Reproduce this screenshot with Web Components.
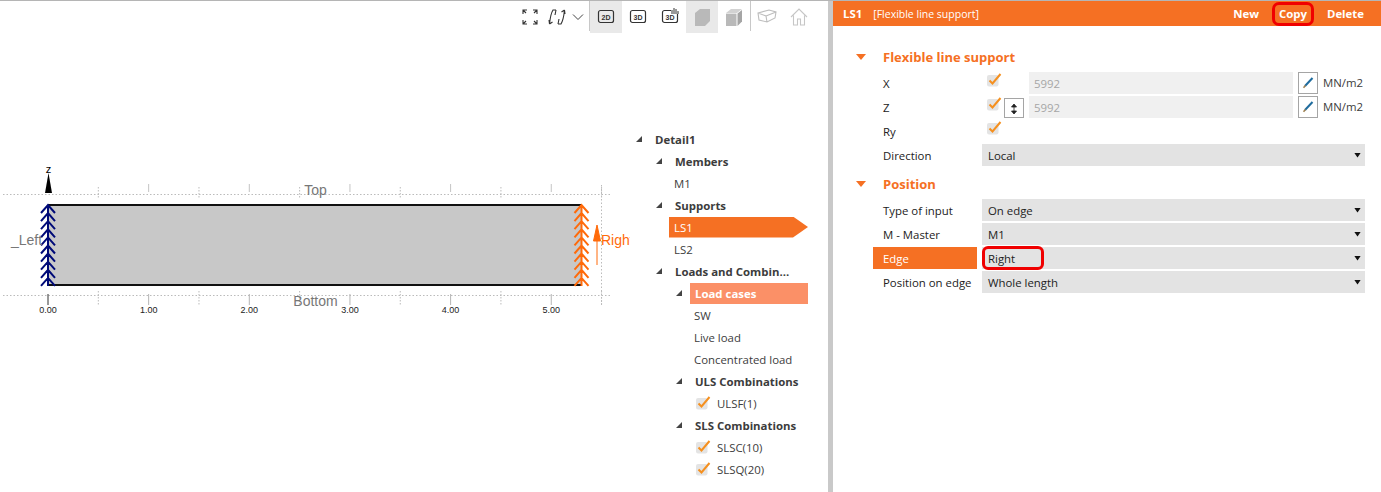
<!DOCTYPE html>
<html lang="en">
<head>
<meta charset="UTF-8">
<title>Flexible line support</title>
<style>
    html, body { margin: 0; height: 100%; background: #fff; overflow: hidden; }
    body { font: 11.4px "Open Sans", "Noto Sans", sans-serif; color: #3c3c3c; }
</style>
</head>
<body>
<app-shell>
    <div slot="left">
        <tool-bar></tool-bar>
        <div style="display:flex">
            <model-canvas></model-canvas>
            <tree-panel>
                <tree-row level="0" arrow bold>Detail1</tree-row>
                <tree-row level="1" arrow bold>Members</tree-row>
                <tree-row level="2">M1</tree-row>
                <tree-row level="1" arrow bold>Supports</tree-row>
                <tree-row level="2" state="active">LS1</tree-row>
                <tree-row level="2">LS2</tree-row>
                <tree-row level="1" arrow bold>Loads and Combin...</tree-row>
                <tree-row level="2" arrow bold state="soft">Load cases</tree-row>
                <tree-row level="3">SW</tree-row>
                <tree-row level="3">Live load</tree-row>
                <tree-row level="3">Concentrated load</tree-row>
                <tree-row level="2" arrow bold>ULS Combinations</tree-row>
                <tree-row level="3" check>ULSF(1)</tree-row>
                <tree-row level="2" arrow bold>SLS Combinations</tree-row>
                <tree-row level="3" check>SLSC(10)</tree-row>
                <tree-row level="3" check>SLSQ(20)</tree-row>
            </tree-panel>
        </div>
    </div>
    <div slot="right">
        <panel-header></panel-header>
        <prop-section title="Flexible line support">
            <prop-row label="X"><value-field value="5992" unit="MN/m2"></value-field></prop-row>
            <prop-row label="Z"><value-field value="5992" unit="MN/m2" flip></value-field></prop-row>
            <prop-row label="Ry"><value-field></value-field></prop-row>
            <prop-row label="Direction"><select-box>Local</select-box></prop-row>
        </prop-section>
        <prop-section title="Position">
            <prop-row label="Type of input"><select-box>On edge</select-box></prop-row>
            <prop-row label="M - Master"><select-box>M1</select-box></prop-row>
            <prop-row label="Edge" active><select-box marked>Right</select-box></prop-row>
            <prop-row label="Position on edge"><select-box>Whole length</select-box></prop-row>
        </prop-section>
    </div>
</app-shell>

<script>
    const CHECK = `<svg width="15" height="14" viewBox="0 0 15 14" style="display:block">
        <rect x="0" y="2" width="11.5" height="11.5" rx="2" fill="#e4e4e4"/>
        <path d="M2.5 7.5 L5.5 10.5 L13.5 1" fill="none" stroke="#f5901f" stroke-width="2"/></svg>`;

    // Outer frame: model view on the left, properties on the right
    class AppShell extends HTMLElement {
        constructor() {
            super();
            this.attachShadow({ mode: 'open' }).innerHTML = `
                <style>
                    :host { display: flex; height: 492px; box-sizing: border-box; border-top: 1px solid #b5b5b5; }
                    .left { width: 828px; flex: none; }
                    .right { flex: 1; border-left: 5px solid #c9c9c9; min-width: 0; }
                </style>
                <div class="left"><slot name="left"></slot></div>
                <div class="right"><slot name="right"></slot></div>`;
        }
    }

    class ToolBar extends HTMLElement {
        constructor() {
            super();
            const ic = (body, on) => `<div class="b ${on ? 'on' : ''}"><svg width="24" height="24" viewBox="0 0 24 24">${body}</svg></div>`;
            const label = t => `<rect x="4.5" y="5.5" width="15" height="12" rx="2" fill="none" stroke="#333" stroke-width="1.2"/>
                <text x="12" y="14.5" text-anchor="middle" font-family="Liberation Sans" font-weight="bold" font-size="7" fill="#333">${t}</text>`;
            this.attachShadow({ mode: 'open' }).innerHTML = `
                <style>
                    :host { display: flex; height: 32px; margin-bottom: 4px; justify-content: flex-end; padding-right: 13px; }
                    .b { width: 32px; height: 32px; display: flex; align-items: center; justify-content: center; }
                    .on { background: #e9e9e9; }
                    .sep { width: 1px; height: 30px; background: #c8c8c8; }
                    .fit { width: 34px; }
                    .nar { width: 31px; }
                    svg { display: block; }
                </style>
                <div class="b fit"><svg width="24" height="24" viewBox="0 0 24 24" fill="none" stroke="#333" stroke-width="1.1">
                    <path d="M5 9V5h4M5 5l3 3M19 9V5h-4M19 5l-3 3M5 15v4h4M5 19l3-3M19 15v4h-4M19 19l-3-3"/></svg></div>
                <div class="b" style="width:20px"><svg width="20" height="24" viewBox="0 0 20 24" fill="none" stroke="#333" stroke-width="1.1">
                    <path d="M9 5H6C3.5 9 3 14 2.5 19M2.5 19l-.5-4M2.5 19l3-2M11 19h3c2.500-4 3-9 3.500-14M17.500 5l.5 4M17.500 5l-3 2M9 5l-1 5M11 19l1-5"/></svg></div>
                <div class="b" style="width:22px"><svg width="12" height="8" viewBox="0 0 12 8" fill="none" stroke="#444"><path d="M1 1.500l5 5 5-5"/></svg></div>
                <div class="sep"></div>
                ${ic(label('2D'), true)}
                ${ic(label('3D'))}
                ${ic(label('3D') + '<rect x="13" y="3" width="7" height="6" fill="#fff"/><path d="M14 9V5M16 9V3M18 9V4M20 9V6" stroke="#333"/>')}
                ${ic('<path d="M5 8l5-4h10v12l-5 5H5z" fill="#b9b9b9"/>', true)}
                ${ic('<path d="M4 8l5-4h11l-5 4z" fill="#d2d2d2"/><path d="M4 8.600h10.500V21H4z" fill="#b9b9b9"/><path d="M15.500 8.500L20 5v11.500L15.500 21z" fill="#a5a5a5"/>')}
                <div class="sep"></div>
                ${ic('<path d="M3 8l11-3 7 2-1 6-8 4-8-2zM3 8l8 3 1 6M11 11l10-4" fill="none" stroke="#bdbdbd" stroke-width="1.1"/>')}
                ${ic('<path d="M4 12l8-8 8 8M6.500 10.500V20h4v-6h3v6h4v-9.500" fill="none" stroke="#c6c6c6" stroke-width="1.1"/>')}`;
        }
    }

    // Section drawing. The svg is a free canvas, coordinates follow the model axis
    class ModelCanvas extends HTMLElement {
        constructor() {
            super();
            const chevrons = (x, col) => {
                let d = `M${x} 205V286`;
                for (let y = 205; y < 282; y += 8.1) d += `M${x - 7} ${y + 8}L${x} ${y}L${x + 7} ${y + 8}`;
                return `<path d="${d}" fill="none" stroke="${col}" stroke-width="2"/>`;
            };
            const X = v => 48 + v * 100.65;
            let grid = '';
            for (let i = 0; i <= 11; i++) {
                const x = X(i / 2);
                if (i % 2) {
                    grid += `<path d="M${x} 187V199M${x} 291V305" stroke="#bbb" stroke-dasharray="1.500 1.500"/>`;
                } else {
                    if (i) grid += `<path d="M${x} 184V192" stroke="#c4c4c4"/>`;
                    if (i < 11) grid += `<path d="M${x} 294V305" stroke="${i ? '#b5b5b5' : '#333'}"/>`;
                    grid += `<text x="${x}" y="313" text-anchor="middle" class="t">${(i / 2).toFixed(2)}</text>`;
                }
            }
            this.attachShadow({ mode: 'open' }).innerHTML = `
                <style>
                    :host { display: block; width: 630px; flex: none; height: 455px; }
                    svg { display: block; }
                    text { font-family: "Liberation Sans", sans-serif; }
                    .t { font-size: 9px; fill: #222; }
                    .g { font-size: 14px; fill: #777; }
                </style>
                <svg width="630" height="455" viewBox="0 37 630 455">
                    <path d="M3 194.500H612M3 295.500H612" stroke="#bbb" stroke-dasharray="1.500 2"/>
                    ${grid.replace(/<text.*?<\/text>/g, '')}
                    <path d="M601.500 185V305" stroke="#bbb" stroke-dasharray="1.500 2"/>
                    <rect x="48" y="205" width="533" height="80" fill="#c8c8c8"/>
                    <path d="M48 205H581M48 285H581" stroke="#111" stroke-width="2"/>
                    ${(grid.match(/<text.*?<\/text>/g) || []).join('')}
                    ${chevrons(48, '#000a78')}
                    ${chevrons(581.5, '#ff6a0a')}
                    <path d="M48.500 173L45 193H52z" fill="#000"/>
                    <text x="48.500" y="173" text-anchor="middle" style="font-size:11px" fill="#000">z</text>
                    <text x="315.500" y="195" text-anchor="middle" class="g">Top</text>
                    <text x="315.500" y="306" text-anchor="middle" class="g">Bottom</text>
                    <text x="11" y="245" class="g">_Left</text>
                    <path d="M597 225l3.500 16h-7zM597 241V265" fill="#ff6a0a" stroke="#ff6a0a" stroke-width="1"/>
                    <text x="601" y="245" style="font-size:14px" fill="#ff6a0a">Right</text>
                </svg>`;
        }
    }

    class TreePanel extends HTMLElement {
        constructor() {
            super();
            this.attachShadow({ mode: 'open' }).innerHTML = `
                <style>:host { display: block; flex: 1; padding: 91px 20px 0 0; }</style><slot></slot>`;
        }
    }

    // level + arrow + check attributes drive the indent of a row
    class TreeRow extends HTMLElement {
        constructor() {
            super();
            const level = Number(this.getAttribute('level'));
            const arrow = this.hasAttribute('arrow');
            const check = this.hasAttribute('check');
            const pad = check ? 66 : (arrow ? 6 + level * 20 : level * 20 - 1);
            this.attachShadow({ mode: 'open' }).innerHTML = `
                <style>
                    :host { display: flex; align-items: center; height: 22px; padding-left: ${pad}px; }
                    .a { width: 14px; height: 6px; flex: none; }
                    .a i { display: block; width: 6px; height: 6px; background: #444; clip-path: polygon(100% 0, 100% 100%, 0 100%); }
                    .l { flex: 1; height: 21px; line-height: 21px; padding-left: 5px; min-width: 0; white-space: nowrap; }
                    :host([bold]) .l { font-weight: 700; }
                    :host([state=active]) .l { color: #fff; background: #f57023; clip-path: polygon(0 0, 124px 0, 100% 50%, 124px 100%, 0 100%); }
                    :host([state=soft]) .l { color: #fff; background: #fb9067; }
                    .c { margin-right: 6px; }
                    :host([check]) .l { padding-left: 0; }
                </style>
                ${arrow ? '<div class="a"><i></i></div>' : ''}
                ${check ? '<div class="c">' + CHECK + '</div>' : ''}
                <div class="l"><slot></slot></div>`;
        }
    }

    class PanelHeader extends HTMLElement {
        constructor() {
            super();
            this.attachShadow({ mode: 'open' }).innerHTML = `
                <style>
                    :host { display: flex; align-items: center; height: 25px; background: #f57023; color: #fff; padding: 0 17px 0 10px; }
                    b { font-weight: 700; }
                    .n { margin-right: 11px; }
                    .sub { flex: 1; font-size: 10.500px; }
                    .act { margin-left: 20px; position: relative; }
                    .mark::after { content: ""; position: absolute; left: -7px; right: -7px; top: -3px; bottom: -3px;
                        border: 3px solid #f00000; border-radius: 7px; box-sizing: border-box; top: -4px; bottom: -5px; }
                </style>
                <b class="n">LS1</b><span class="sub">[Flexible line support]</span>
                <b class="act">New</b><b class="act mark">Copy</b><b class="act">Delete</b>`;
        }
    }

    class PropSection extends HTMLElement {
        constructor() {
            super();
            this.attachShadow({ mode: 'open' }).innerHTML = `
                <style>
                    :host { display: block; padding: 0 16px 0 23px; }
                    :host(:first-of-type) { padding-top: 20px; }
                    .h { display: flex; align-items: center; height: 22px; margin: 0 0 4px; padding-top: 5px; color: #f57023; font-weight: 700; font-size: 13px; }
                    :host(:first-of-type) .h { padding-top: 0; }
                    .h i { width: 10px; height: 6px; background: #f57023; clip-path: polygon(0 0, 100% 0, 50% 100%); margin-right: 17px; }
                </style>
                <div class="h"><i></i><span></span></div><slot></slot>`;
            this.shadowRoot.querySelector('span').textContent = this.getAttribute('title');
        }
    }

    class PropRow extends HTMLElement {
        constructor() {
            super();
            this.attachShadow({ mode: 'open' }).innerHTML = `
                <style>
                    :host { display: flex; height: 22px; margin-bottom: 2px; margin-left: 17px; }
                    .l { width: 94px; padding-left: 10px; margin-right: 5px; line-height: 24px; flex: none; white-space: nowrap; color: #222; }
                    :host([active]) .l { background: #f57023; color: #fff; }
                    .c { flex: 1; min-width: 0; }
                </style>
                <div class="l"></div><div class="c"><slot></slot></div>`;
            this.shadowRoot.querySelector('.l').textContent = this.getAttribute('label');
        }
    }

    class ValueField extends HTMLElement {
        constructor() {
            super();
            const value = this.getAttribute('value');
            const flip = this.hasAttribute('flip');
            this.attachShadow({ mode: 'open' }).innerHTML = `
                <style>
                    :host { display: flex; height: 22px; }
                    .k { width: 47px; flex: none; display: flex; padding-left: 5px; box-sizing: border-box; }
                    .k svg { margin-top: 1px; }
                    .f { width: 22px; height: 20px; box-sizing: border-box; border: 1px solid #a5a5a5; margin: 2px 0 0 0; display: flex; align-items: center; justify-content: center; width: 20px; margin-left: 2px; }
                    .v { flex: 1; background: #f0f0f0; color: #a6a6a6; padding-left: 5px; line-height: 23px; }
                    .e { width: 20px; box-sizing: border-box; border: 1px solid #a5a5a5; margin-left: 5px; display: flex; align-items: center; justify-content: center; flex: none; }
                    .u { width: 42px; margin-left: 5px; flex: none; line-height: 21px; white-space: nowrap; }
                </style>
                <div class="k">${CHECK}${flip ? `<div class="f"><svg width="8" height="12" viewBox="0 0 8 12"><path d="M4 1L1.500 4h5zM4 11L1.500 8h5zM4 3v6" fill="#222" stroke="#222" stroke-width=".8"/></svg></div>` : ''}</div>
                ${value ? `<div class="v">${value}</div>
                <div class="e"><svg width="12" height="12" viewBox="0 0 12 12"><path d="M10.500 1L3 9" stroke="#1f6c9e" stroke-width="2"/><path d="M3.500 8.500L1.500 10.800" stroke="#a08050" stroke-width="1.600"/></svg></div>
                <div class="u">${this.getAttribute('unit')}</div>` : ''}`;
        }
    }

    class SelectBox extends HTMLElement {
        constructor() {
            super();
            this.attachShadow({ mode: 'open' }).innerHTML = `
                <style>
                    :host { display: flex; align-items: center; justify-content: space-between; position: relative; height: 22px; background: #e3e3e3; color: #222; padding: 0 4px 0 6px; line-height: 21px; }
                    i { width: 7px; height: 5px; background: #111; clip-path: polygon(0 0, 100% 0, 50% 100%); }
                    .m { display: none; position: absolute; left: 0; top: -1px; width: 62px; height: 24px; box-sizing: border-box; border: 3px solid #f00000; border-radius: 6px; }
                    :host([marked]) .m { display: block; }
                </style>
                <span><slot></slot></span><i></i><div class="m"></div>`;
        }
    }

    customElements.define('app-shell', AppShell);
    customElements.define('tool-bar', ToolBar);
    customElements.define('model-canvas', ModelCanvas);
    customElements.define('tree-panel', TreePanel);
    customElements.define('tree-row', TreeRow);
    customElements.define('panel-header', PanelHeader);
    customElements.define('prop-section', PropSection);
    customElements.define('prop-row', PropRow);
    customElements.define('value-field', ValueField);
    customElements.define('select-box', SelectBox);
</script>
</body>
</html>
